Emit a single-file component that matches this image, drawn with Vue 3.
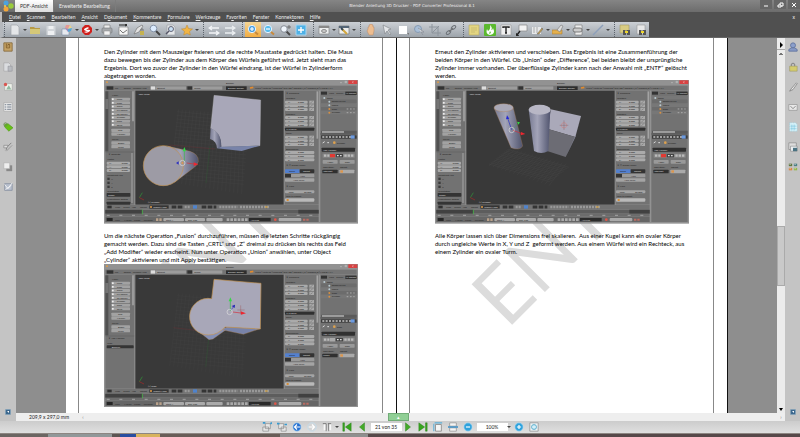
<script setup>
import { ref } from 'vue';

const pageNumber = ref('21 von 35');
const zoomLevel = ref('100%');

const menus = ['Datei', 'Scannen', 'Bearbeiten', 'Ansicht', 'Dokument', 'Kommentare', 'Formulare', 'Werkzeuge', 'Favoriten', 'Fenster', 'Konnektoren', 'Hilfe'];
const mnemonic = { Dokument: 1, Favoriten: 2, Fenster: 1, Konnektoren: 6 };

const lens = (fill, sign = '') => `<path d="M7.5 7.5l3.5 3" stroke="#c88a3c" stroke-width="2"/><circle cx="5" cy="5" r="3.7" fill="${fill}" stroke="#e8f4ff"/><path d="${sign}" stroke="#fff" stroke-width="1.2"/>`;
const sheet = '<path d="M2 1h6l2 2v8H2z" fill="#e4e6e8" stroke="#a0a5aa" stroke-width=".7"/>';
const disc = (fill, sign) => `<circle cx="6" cy="6" r="5" fill="${fill}" stroke="#bce0f4" stroke-width=".8"/><path d="${sign}" stroke="#fff" stroke-width="1.4" fill="none"/>`;

const icons = {
  new: sheet,
  open: '<path d="M1 3h4l1 1h5v6H1z" fill="#b79a45"/><path d="M1 5h10v5H1z" fill="#d5c878"/>',
  save: '<path d="M1.5 2h9v9h-9z" fill="#d2d6da"/><path d="M3.5 2h5v3h-5zM3 7h6v4H3z" fill="#eef0f2"/>',
  convert: '<path d="M1 5h7v6H1z" fill="#e6e9ee" stroke="#8090a8" stroke-width=".6"/><path d="M5 1l4 0-2 4-3-1z" fill="#e49a94"/><path d="M9 1l2 3-4 1z" fill="#e9d48a"/><path d="M7 5l4-1-1 3-3 1z" fill="#55a8d6"/><path d="M4 4l3 1v3z" fill="#a085bd"/>',
  pdf: '<path d="M4 1h4l3 3v4l-3 3H4L1 8V4z" fill="#d0201c"/><path d="M3 5q4-3 5-1L5 6q5-1 4 1-3 3-6 1l4-1q-4 0-4-2z" fill="#fff"/>',
  print: '<path d="M3 1h6v4H3z" fill="#eee" stroke="#777" stroke-width=".6"/><rect x="1" y="4" width="10" height="5" rx="1" fill="#a5a8ab" stroke="#73777b" stroke-width=".6"/><path d="M3 7h6v4H3z" fill="#f2f2f2" stroke="#888" stroke-width=".5"/>',
  mail: '<path d="M2 3h9v8H2z" fill="#f4f4f4" stroke="#777" stroke-width=".6"/><path d="M2 1h8M8 0l2 1-2 1" stroke="#222" fill="none"/><path d="M3 6l3 3 4-3" stroke="#777" fill="none"/>',
  sign: '<path d="M1 10l3-6 5-3 1 1-4 6z" fill="#e2e2e2" stroke="#777" stroke-width=".7"/><path d="M7 7h4v4H7z" fill="#c5b251"/><path d="M8 7V5h2v2" stroke="#777" fill="none"/>',
  find: '<path d="M6 6l5 5" stroke="#444" stroke-width="2"/><circle cx="4.5" cy="4.5" r="3.3" fill="#dcecff" stroke="#8694a8"/>',
  findPage: sheet + '<circle cx="6" cy="5" r="2.5" fill="#c8e0f4" stroke="#667"/><path d="M4 7l-3 3" stroke="#556" stroke-width="1.5"/>',
  star: '<path d="M6 1l1.500 3.500 4 .5-3 2.500.8 3.500L6 9.500 2.700 11l.8-3.500L.5 5l4-.5z" fill="#f1b444" stroke="#b88735" stroke-width=".5"/>',
  swap: '<path d="M1 4h10M4 2L1 4l3 2M1 9h10M8 7l3 2-3 2" stroke="#f3f5f7" fill="none" stroke-width="1.3"/>',
  forward: '<path d="M1 4h10M8 2l3 2-3 2M1 9h10M8 7l3 2-3 2" stroke="#eceff2" fill="none" stroke-width="1.3"/>',
  zoomIn: lens('#4b9fe0', 'M5 3v4M3 5h4'),
  zoomOut: lens('#58bcee', 'M3 5h4'),
  zoomDrag: '<path d="M7 7l4 4" stroke="#4a4a4a" stroke-width="2"/><circle cx="5" cy="5" r="3.3" fill="#eef4fb" stroke="#858b94"/><path d="M10 1v4M8 3h4" stroke="#555" stroke-width=".7"/>',
  fit: '<path d="M1 1h10v10H1z" fill="#4fb1e6" stroke="#a8d5ef"/><path d="M6 3v6M3 6h6" stroke="#fff" stroke-width="1.4"/>',
  view: '<path d="M1 2h10v8H1z" fill="#eceeef" stroke="#888" stroke-width=".7"/><path d="M1 2h10v2H1z" fill="#888"/><ellipse cx="6" cy="7" rx="2.5" ry="1.5" fill="#ccc" stroke="#777" stroke-width=".8"/>',
  edit: '<path d="M1 2h10v8H1z" fill="#eceeef" stroke="#777" stroke-width=".7"/><path d="M1 2h10v2H1z" fill="#567"/><path d="M4 5l5 5" stroke="#d2a63c" stroke-width="2"/><path d="M3 4l2 2" stroke="#345" stroke-width="2"/>',
  hand: '<path d="M3 5V3h1V1h1V0h2v1h1v2h1v4l-1 4H4L2 7z" fill="#edbd90" stroke="#b58a68" stroke-width=".5"/>',
  cursor: '<path d="M2 1l8 4-3 1 3 4-1 1-3-4-2 3z" fill="#e3e5e8" stroke="#85898e" stroke-width=".7"/>',
  block: '<path d="M2 2h8v8H2z" fill="#fff"/><path d="M10 9l2 0v2z" fill="#777"/>',
  select: '<circle cx="5" cy="5" r="3.5" fill="#a9bfd8" stroke="#879bb2"/><path d="M5 4l6 4-3 0 2 3" fill="#ddd" stroke="#8b9199" stroke-width=".8"/>',
  crop: '<path d="M3 0v9h9M0 3h9v9M3 9l7-7" stroke="#8d949c" fill="none"/>',
  link: '<path d="M4 8l4-4" stroke="#777" stroke-width="1.2"/><ellipse cx="3.5" cy="8.5" rx="2.5" ry="1.5" transform="rotate(-40 3.5 8.5)" stroke="#6c7177" fill="none"/><ellipse cx="8.5" cy="3.5" rx="2.5" ry="1.5" transform="rotate(-40 8.5 3.5)" stroke="#6c7177" fill="none"/>',
  note: '<path d="M1 1h10v10H1z" fill="#e3d581" stroke="#b4a866" stroke-width=".6"/><path d="M3 4h6M3 6h6M3 8h4" stroke="#bdb068" stroke-width=".6"/>',
  flame: '<rect width="12" height="12" rx="1" fill="#5bb92f"/><path d="M6 1q3 3 1 5 2 0 2-2 3 6-3 7-5-1-3-6l1 2q3-2 2-6z" fill="#fff"/><path d="M6 7l1 2-2 1z" fill="#5bb92f"/>',
  text: '<path d="M1 1h10v10H1z" fill="#f0f0f0" stroke="#999" stroke-width=".6"/><path d="M3 4V3h6v1M6 3v6M5 9h2" stroke="#222" stroke-width="1.4"/>',
  callout: '<path d="M3 1h8v6H3z" fill="#f3f3f3" stroke="#888" stroke-width=".7"/><path d="M4 7L1 11M0 9v3h3" stroke="#222" fill="none" stroke-width="1.4"/>',
  highlight: '<path d="M0 3h9v7H0z" fill="#e7e9eb"/><path d="M2 3v6M5 3v6" stroke="#aaa"/><path d="M5 10l5-6 1 1-4 5z" fill="#c39c4b" stroke="#666" stroke-width=".5"/>',
  stamp: '<path d="M0 6h10v4H0z" fill="#e4b04d" stroke="#a87d36" stroke-width=".6"/><path d="M5 6l4-5 2 1-3 6z" fill="#ddd" stroke="#777" stroke-width=".6"/>',
  attach: '<path d="M3 1h7v10H3z" fill="#eee" stroke="#777" stroke-width=".6"/><rect x="1" y="4" width="9" height="4" rx="2" fill="#ccc" stroke="#666" stroke-width=".8"/>',
  line: '<path d="M1 11L11 1" stroke="#8d9fba" stroke-width="1.5"/>',
  searchFolder: '<path d="M1 1h9v8H1z" fill="#d9cc82" stroke="#a59b64" stroke-width=".6"/><path d="M4 8V6h2l1 1 1-1h3v5H8V9H7v2H4z" fill="#555"/><path d="M6 7h3v2H6z" fill="#efd72b"/>',
  searchDoc: '<path d="M2 1h8v9H2z" fill="#e8e8e8" stroke="#999" stroke-width=".6"/><path d="M4 8V6h2l1 1 1-1h3v5H8V9H7v2H4z" fill="#555"/><path d="M6 7h3v2H6z" fill="#efd72b"/>',
  bookmarks: '<path d="M1 1h10v10H1z" fill="#c4a265" stroke="#84693c"/><path d="M4 2v5h4V3H6v3" stroke="#765322" fill="#e3c280"/>',
  pages: '<path d="M1 1h6l2 2v8H1z" fill="#dadcdf" stroke="#999" stroke-width=".6"/><path d="M6 5h5v6H6z" fill="#b8bbc0" stroke="#8c8f94" stroke-width=".6"/>',
  comments: '<path d="M2 2h9v8H2z" fill="#eef2ea" stroke="#999" stroke-width=".6"/><circle cx="3" cy="3" r="2" fill="#d95550"/><path d="M5 7l2-3 3 5H4z" fill="#91b9a2"/>',
  fields: '<path d="M1 1h10v10H1z" fill="#f0f0f0" stroke="#999" stroke-width=".6"/><path d="M2 3h2M5 3h5M2 5h2M5 5h5M2 7h2M5 7h5M2 9h2M5 9h5" stroke="#7c8693"/>',
  tag: '<path d="M2 3l4-1 6 5-5 4-5-5z" fill="#67c116" stroke="#468f13" stroke-width=".6"/><circle cx="3" cy="3" r="2" stroke="#688b51" fill="none"/>',
  pen: '<path d="M3 10q2-1 1-3l6-6" stroke="#777" fill="none"/><path d="M1 4h5L5 7H1zM4 11l7-7" fill="#ddd" stroke="#858585" stroke-width=".8"/>',
  layers: '<path d="M4 4h7v7H4z" fill="#888"/><path d="M1 1h7v7H1z" fill="#eee" stroke="#aaa" stroke-width=".6"/>',
  check: '<path d="M2 2h9v8H2z" fill="#b7bfcd" stroke="#8992a1"/><path d="M2 3l4 5 5-7M3 9l7-5" stroke="#f7f7f7" fill="none"/>',
  user: '<circle cx="6" cy="4" r="3" fill="#8b9fcb" stroke="#60729c"/><path d="M1 11V9l3-2h4l3 2v2z" fill="#8699c5" stroke="#60729c"/>',
  lock: '<path d="M4 5V3q2-3 4 0v3" stroke="#888" fill="none" stroke-width="1.3"/><path d="M2 5h9v6H2z" fill="#d4cc6e" stroke="#97905b" stroke-width=".6"/>',
  brush: '<path d="M2 11l2-3 6-7 1 1-5 7z" fill="#e9e9e9" stroke="#666" stroke-width=".7"/>',
  envelope: '<path d="M1 3h10v7H1z" fill="#e8e8e8" stroke="#888" stroke-width=".7"/><path d="M3 5l3 3 3-3" stroke="#777" fill="none"/>',
  form: '<path d="M2 1h7l2 2v8H2z" fill="#d9f3fa" stroke="#8bcadb" stroke-width=".7" stroke-dasharray="1"/><path d="M4 3v7M6 3v7M8 3v7M3 5h7M3 8h7" stroke="#63b9d5" stroke-width=".5"/>',
  disk: '<path d="M1 1h9v8H1z" fill="#ddd" stroke="#888" stroke-width=".8"/><path d="M3 5h8v6H3z" fill="#e9edf0" stroke="#777" stroke-width=".6"/><path d="M6 7h5v4H6z" fill="#4b7382"/>',
  tiles: '<path d="M1 2h4v3H1z" fill="#607840"/><path d="M7 2h4v3H7z" fill="#4d8084"/><path d="M1 7h4v3H1z" fill="#d88746"/><path d="M7 7h4v3H7z" fill="#96b84c"/><path d="M2 3h1M8 3h1M2 8h1M8 8h1" stroke="#eef"/>',
  pop: '<path d="M1 1h10v10H1z" fill="#3c688e" stroke="#83a6bf"/><path d="M4 4h4v4z" fill="#fff"/>',
  rotateLeft: '<path d="M4 2h6v6H4zM1 6h7v5H1z" fill="#e8e8e8" stroke="#888" stroke-width=".8"/><path d="M1 1h3M10 2l2-1" stroke="#399bd0" stroke-width="2"/>',
  rotateRight: '<path d="M2 2h6v6H2zM5 6h6v5H5z" fill="#e8e8e8" stroke="#888" stroke-width=".8"/><path d="M0 2h3M9 3h3" stroke="#399bd0" stroke-width="2"/>',
  back: disc('#256fd0', 'M10 6H4M6 3L3 6l3 3'),
  ahead: disc('#d4d4d4', 'M2 6h6M6 3l3 3-3 3'),
  spread: '<path d="M2 2h3v8H2zM8 2h3v8H8z" fill="#f8f8f8"/><path d="M1 2h4v8M7 2h4M8 2v8M5 10v1M8 10v1" stroke="#666" fill="none"/>',
  first: '<path d="M1 1h2v10H1zM11 1v10L4 6z" fill="#37a51f" stroke="#267d18" stroke-width=".5"/>',
  prev: '<path d="M9 1v10L3 6z" fill="#43aa28" stroke="#267d18" stroke-width=".5"/>',
  next: '<path d="M3 1v10l6-5z" fill="#43aa28" stroke="#267d18" stroke-width=".5"/>',
  last: '<path d="M9 1h2v10H9zM1 1v10l7-5z" fill="#37a51f" stroke="#267d18" stroke-width=".5"/>',
  fitPage: '<path d="M3 3h7v8H3z" fill="#f5f5f5" stroke="#888"/><path d="M2 1h9M1 2v9" stroke="#5baed8" stroke-width="1.3"/>',
  fitWidth: '<path d="M2 1h8v4H2zM2 7h8v4H2z" fill="#f5f5f5" stroke="#999"/><path d="M0 5h12v2H0z" fill="#4b94c6"/>',
  minus: disc('#2fa2dc', 'M3.5 6h5'),
  plus: disc('#2fa2dc', 'M3.5 6h5M6 3.5v5'),
  loupe: '<path d="M1 1h10v10H1z" fill="#edf3f5" stroke="#999"/><circle cx="6" cy="6" r="3" fill="#b9e4f3" stroke="#5aaac8"/><path d="M4 6h4" stroke="#fff"/>'
};

const tool = (name, label, caret = false) => ({ name, label, caret });
const toolGroups = [
  [tool('new', 'Neu', true), tool('open', 'Öffnen'), tool('save', 'Speichern'), tool('convert', 'Konvertieren', true), tool('pdf', 'PDF erstellen', true), tool('print', 'Drucken'), tool('mail', 'Senden'), tool('sign', 'Signieren'), tool('find', 'Suchen'), tool('findPage', 'Seite suchen'), tool('star', 'Favoriten', true)],
  [tool('swap', 'Tauschen'), tool('forward', 'Weiter')],
  [tool('zoomIn', 'Vergrößern'), tool('zoomOut', 'Verkleinern'), tool('zoomDrag', 'Dynamischer Zoom'), tool('fit', 'Einpassen')],
  [tool('view', 'Anzeigen', true), tool('edit', 'Bearbeiten', true)],
  [tool('hand', 'Hand'), tool('cursor', 'Auswahl'), tool('block', 'Bereich'), tool('select', 'Objekt'), tool('crop', 'Beschneiden'), tool('link', 'Verknüpfung')],
  [tool('note', 'Notiz'), tool('flame', 'Hervorheben'), tool('text', 'Text'), tool('callout', 'Legende'), tool('highlight', 'Markieren', true), tool('stamp', 'Stempel', true), tool('attach', 'Anhang', true), tool('line', 'Linie', true)],
  [tool('searchFolder', 'Ordner durchsuchen'), tool('searchDoc', 'Dokument durchsuchen')]
];

const leftTools = ['bookmarks', 'pages', 'comments', 'fields', 'tag', 'pen', 'layers', 'check'];
const rightTools = ['user', 'lock', 'brush', 'envelope', 'form', 'disk', 'tiles'];

const pages = [
  [
    {
      lines: [
        'Den Zylinder mit dem Mauszeiger fixieren und die rechte Maustaste gedrückt halten. Die Maus',
        'dazu bewegen bis der Zylinder aus dem Körper des Würfels geführt wird. Jetzt sieht man das',
        'Ergebnis. Dort wo zuvor der Zylinder in den Würfel eindrang, ist der Würfel in Zylinderform',
        'abgetragen worden.'
      ],
      scene: 'cut'
    },
    {
      lines: [
        'Um die nächste Operation „Fusion“ durchzuführen, müssen die letzten Schritte rückgängig',
        'gemacht werden. Dazu sind die Tasten „CRTL“ und „Z“ dreimal zu drücken bis rechts das Feld',
        '„Add Modifier“ wieder erscheint. Nun unter Operation „Union“ anwählen, unter Object',
        '„Cylinder“ aktivieren und mit Apply bestätigen.'
      ],
      scene: 'union'
    }
  ],
  [
    {
      lines: [
        'Erneut den Zylinder aktivieren und verschieben. Das Ergebnis ist eine Zusammenführung der',
        'beiden Körper in den Würfel. Ob „Union“ oder „Difference“, bei beiden bleibt der ursprüngliche',
        'Zylinder immer vorhanden. Der überflüssige Zylinder kann nach der Anwahl mit „ENTF“ gelöscht',
        'werden.'
      ],
      scene: 'moved'
    },
    {
      lines: [
        'Alle Körper lassen sich über Dimensions frei skalieren.  Aus einer Kugel kann ein ovaler Körper',
        'durch ungleiche Werte in X, Y und Z  geformt werden. Aus einem Würfel wird ein Rechteck, aus',
        'einem Zylinder ein ovaler Turm.'
      ]
    }
  ]
];

// contents of the Blender window
const meshButtons = ['Plane', 'Cube', 'Circle', 'UV Sphere', 'Ico Sphere', 'Cylinder', 'Cone', 'Torus'];
const fieldRows = [
  { label: 'Location:', y: 179 },
  { label: 'Rotation:', y: 225 },
  { label: 'Scale:', y: 284 },
  { label: 'Dimensions:', y: 330 }
];
const infoMenus = ['File', 'Render', 'Window', 'Help'];
const viewMenus = ['View', 'Select', 'Add', 'Object'];
const timeMenus = ['View', 'Marker', 'Frame', 'Playback'];
const outliner = ['Scene', 'RenderLayers', 'World', 'Cube', 'Cylinder'];
</script>

<template>
  <div class="app">
    <header class="titlebar">
      <svg class="logo" viewBox="0 0 12 12" aria-hidden="true">
        <circle cx="4" cy="3" r="2.5" fill="#4aa3df" />
        <circle cx="9" cy="6" r="2.7" fill="#9acb3c" />
        <circle cx="4" cy="9" r="2.5" fill="#f2a63a" />
        <circle cx="3" cy="6" r="1" fill="#f8d24c" />
      </svg>
      <button class="tab active">PDF-Ansicht</button>
      <button class="tab">Erweiterte Bearbeitung</button>
      <h1>Blender Anleitung 3D Drucker - PDF Converter Professional 8.1</h1>
      <div class="window-buttons">
        <button aria-label="Minimieren"><svg viewBox="0 0 8 8"><path d="M2 5h4" /></svg></button>
        <button aria-label="Wiederherstellen"><svg viewBox="0 0 8 8"><path d="M2 4h3v2H2zM4 4V2h3v3H5" /></svg></button>
        <button aria-label="Schließen"><svg viewBox="0 0 8 8"><path d="M2 2l4 4M6 2L2 6" /></svg></button>
      </div>
    </header>

    <nav class="menubar">
      <button v-for="menu in menus" :key="menu">{{ menu.slice(0, mnemonic[menu] || 0) }}<u>{{ menu[mnemonic[menu] || 0] }}</u>{{ menu.slice((mnemonic[menu] || 0) + 1) }}</button>
      <button class="close-doc" aria-label="Dokument schließen">x</button>
    </nav>

    <div class="toolrow">
      <div class="toolbar">
        <div v-for="(group, i) in toolGroups" :key="i" class="group">
          <template v-for="item in group" :key="item.name">
            <button class="tool" :class="{ pressed: item.name === 'zoomIn' }" :aria-label="item.label">
              <svg viewBox="0 0 12 12" fill="none" v-html="icons[item.name]"></svg>
            </button>
            <span v-if="item.caret" class="caret"></span>
          </template>
        </div>
      </div>
    </div>

    <div class="workspace">
      <aside class="side">
        <button v-for="name in leftTools" :key="name" :aria-label="name">
          <svg viewBox="0 0 12 12" fill="none" v-html="icons[name]"></svg>
        </button>
        <button class="expand" aria-label="Ausklappen"><svg viewBox="0 0 12 12" v-html="icons.pop"></svg></button>
      </aside>

      <main class="document">
        <article v-for="(page, p) in pages" :key="p" class="page">
          <svg class="watermark" viewBox="0 0 331 375" preserveAspectRatio="xMinYMin slice" aria-hidden="true">
            <text transform="translate(110 292) rotate(-45)">ENTWURF</text>
          </svg>
          <div class="sheet">
            <section v-for="(block, b) in page" :key="b">
              <p><span v-for="line in block.lines" :key="line">{{ line }}</span></p>

              <svg v-if="block.scene" class="blender" viewBox="12 121 762 431">
                <defs>
                  <linearGradient :id="'tube' + p + b" x1="0" x2="1">
                    <stop offset="0" stop-color="#777a92" />
                    <stop offset=".4" stop-color="#a3a4b8" />
                    <stop offset="1" stop-color="#50546e" />
                  </linearGradient>
                </defs>
                <rect x="12" y="121" width="762" height="431" fill="#929292" />
                <path d="M18 125h6v5h-6z" fill="#d49a52" />
                <text x="378" y="133" class="dark">Blender</text>
                <rect x="745" y="122" width="27" height="11" fill="#d84242" />
                <path d="M756 125l5 5m0-5l-5 5M720 129h6M735 125h5v4h-5z" stroke="#eee" fill="none" />

                <rect x="16" y="138" width="754" height="14" fill="#747474" />
                <rect x="20" y="140" width="20" height="10" fill="#333" />
                <text v-for="(item, i) in infoMenus" :key="item" :x="44 + i * 27" y="148" class="dark">{{ item }}</text>
                <rect x="152" y="140" width="14" height="10" fill="#ddd" />
                <rect x="168" y="140" width="90" height="10" fill="#9c9c9c" />
                <rect x="262" y="140" width="14" height="10" fill="#333" />
                <rect x="279" y="140" width="88" height="10" fill="#9c9c9c" />
                <text x="172" y="148" class="dark">Default</text>
                <text x="283" y="148" class="dark">Scene</text>
                <rect x="378" y="140" width="62" height="11" fill="#2e2e2e" />
                <text x="384" y="148" class="light">Blender Render</text>
                <path d="M450 145l10-2" stroke="#e28a2d" stroke-width="5" />
                <text x="465" y="148" class="dark">v2.69 | Verts:96 | Faces:38 | Tris:188 | Objects:1/2 | Lamps:0/0 | Mem:8.41M</text>

                <rect x="16" y="153" width="87" height="342" fill="#727272" />
                <rect x="16" y="155" width="9" height="180" fill="#515151" />
                <path d="M16 178h9v30h-9z" fill="#747474" />
                <path d="M99 155v90" stroke="#a3a3a3" stroke-width="5" />
                <text x="36" y="170" class="dark">Mesh:</text>
                <g v-for="(name, i) in meshButtons" :key="name">
                  <rect x="34" :y="174 + i * 11" width="56" height="9" rx="2" fill="#a2a2a2" />
                  <rect x="36" :y="176 + i * 11" width="5" height="5" fill="#eee" />
                  <text x="50" :y="181 + i * 11" class="dark">{{ name }}</text>
                </g>
                <rect x="34" y="267" width="56" height="10" rx="2" fill="#a2a2a2" />
                <rect x="34" y="278" width="56" height="10" rx="2" fill="#a2a2a2" />
                <text x="54" y="275" class="dark">Grid</text>
                <text x="51" y="286" class="dark">Monkey</text>
                <text x="36" y="301" class="dark">Curve:</text>
                <rect x="34" y="305" width="56" height="10" rx="2" fill="#a2a2a2" />
                <rect x="34" y="316" width="56" height="10" rx="2" fill="#a2a2a2" />
                <text x="54" y="313" class="dark">Bezier</text>
                <text x="54" y="324" class="dark">Circle</text>
                <path d="M16 337h87" stroke="#565656" />
                <text x="25" y="346" class="dark">▼ {{ block.scene === 'union' ? 'Add Modifier' : 'Translate' }}</text>
                <g v-if="block.scene === 'union'">
                  <text x="22" y="360" class="dark">Type</text>
                  <rect x="20" y="365" width="81" height="9" rx="2" fill="#343434" />
                  <text x="35" y="372" class="light">Boolean</text>
                </g>
                <g v-else>
                  <text x="22" y="360" class="dark">Vector</text>
                  <g v-for="i in 3" :key="i">
                    <rect x="20" :y="355 + i * 11" width="70" height="9" rx="3" fill="#aaa" />
                    <text x="28" :y="362 + i * 11" class="dark">{{ 'XYZ'[i - 1] }}:</text>
                    <text x="65" :y="362 + i * 11" class="dark">0.000</text>
                    <rect x="22" :y="402 + i * 12" width="7" height="7" fill="#3b3b3b" />
                    <text x="34" :y="408 + i * 12" class="dark">{{ 'XYZ'[i - 1] }}</text>
                  </g>
                  <text x="22" y="408" class="dark">Constraint Axis</text>
                  <text x="22" y="456" class="dark">Orientation</text>
                  <rect x="20" y="460" width="71" height="11" rx="2" fill="#343434" />
                  <text x="24" y="468" class="light">Global</text>
                  <text x="22" y="481" class="dark">Proportional Editing</text>
                  <rect x="20" y="486" width="71" height="9" rx="2" fill="#343434" />
                  <path d="M96 340v150" stroke="#999" stroke-width="4" />
                </g>

                <rect x="106" y="153" width="445" height="342" fill="#393939" />
                <text x="116" y="166" class="light">User Persp</text>
                <text x="144" y="489" class="light">(1) {{ block.scene === 'union' ? 'Cube' : 'Cylinder' }}</text>
                <path d="M118 474l9-15" stroke="#2f9a38" stroke-width="2" />
                <path d="M118 474l14 7" stroke="#a82828" stroke-width="2" />

                <g v-if="block.scene === 'cut'">
                  <g stroke="#474747">
                    <path v-for="i in 19" :key="'a' + i" :d="`M${225 + i * 11} ${208 + i}L${197 + i * 12} ${425 + i * 2}`" />
                    <path v-for="i in 19" :key="'b' + i" :d="`M${232 - i} ${205 + i * 11}l218 20`" />
                  </g>
                  <path d="M205 316l140 12" stroke="#742c32" />
                  <path d="M330 320l-12 110" stroke="#285d2e" />
                  <path d="M342 167l140 14-2 137-116 4q0-43-32-56z" fill="#a8a7b8" stroke="#bbb" />
                  <path d="M332 266q33 12 32 56l-13 4q-1-23-21-28z" :fill="`url(#tube${p}${b})`" />
                  <path d="M351 326l13-5 116-3-55 16z" fill="#7883a9" />
                  <path d="M205 320l65 15q27 10 25 30-1 11-15 20l-56 43z" :fill="`url(#tube${p}${b})`" stroke="#ba8950" />
                  <circle cx="190" cy="378" r="60" fill="#9d9ba5" stroke="#c29250" stroke-width="2" />
                  <path d="M253 365v-32" stroke="#35b947" stroke-width="2" />
                  <path d="M248 335l5-13 5 13z" fill="#35d747" />
                  <path d="M260 370l22 3" stroke="#d32d39" stroke-width="2" />
                  <path d="M281 368l14 6-14 5z" fill="#ed2730" />
                  <path d="M236 365v10l-8-5z" fill="#2e32c2" />
                  <circle cx="247" cy="370" r="8" fill="none" stroke="#ddd" stroke-width="2" />
                  <circle cx="247" cy="370" r="3" fill="#dc9653" />
                </g>

                <g v-else-if="block.scene === 'union'">
                  <g stroke="#444">
                    <path v-for="i in 19" :key="'a' + i" :d="`M${225 + i * 11} ${208 + i}L${197 + i * 12} ${425 + i * 2}`" />
                    <path v-for="i in 19" :key="'b' + i" :d="`M${232 - i} ${205 + i * 11}l218 20`" />
                  </g>
                  <path d="M220 312l70 8" stroke="#742c32" />
                  <path d="M326 345l-9 85" stroke="#285d2e" />
                  <path d="M295 323l32 25 12-2 42-30-30-20z" fill="#8490b8" stroke="#ba8950" />
                  <path d="M369 319l11-9 101 5-51 17z" fill="#7883a9" stroke="#ba8950" />
                  <path d="M342 167l141 12-2 137-106-6q-22 24-48 24a56 55 0 1 1 8-109z" fill="#a8a7b8" stroke="#c29250" stroke-width="2" />
                  <path d="M391 262v-30" stroke="#35b947" stroke-width="2" />
                  <path d="M386 233l5-12 5 12z" fill="#35d747" />
                  <path d="M394 258l6-8" stroke="#2e32c2" stroke-width="2" />
                  <path d="M395 247l10-4-1 10z" fill="#2429b4" />
                  <path d="M398 265l24 3" stroke="#d32d39" stroke-width="2" />
                  <path d="M422 263l16 6-15 4z" fill="#ed2730" />
                  <circle cx="389" cy="265" r="8" fill="none" stroke="#ddd" stroke-width="2" />
                  <path d="M422 245v27M412 259h22" stroke="#944" />
                </g>

                <g v-else transform="translate(-96 0)">
                  <g stroke="#4a4a4a">
                    <path v-for="i in 16" :key="'a' + i" :d="`M${325 + i * 11} ${324 + i * 3}L${258 + i * 12} ${374 + i * 4}`" />
                    <path v-for="i in 12" :key="'b' + i" :d="`M${330 - i * 5} ${325 + i * 4}l185 54`" />
                  </g>
                  <path d="M285 205h58l28 114q-8 15-35 5z" :fill="`url(#tube${p}${b})`" stroke="#a77a4e" />
                  <ellipse cx="314" cy="204" rx="29" ry="12" fill="#aaa9b7" stroke="#b17b48" />
                  <path d="M455 209l91 20-17 63-82-24z" fill="#aaa9b9" />
                  <path d="M447 268l82 24-29 60-58-19z" fill="#6c6c74" />
                  <path d="M546 229l-17 63-29 60 31-68z" fill="#85879b" />
                  <path d="M389 210h65l-6 124q-21 12-43 0z" :fill="`url(#tube${p}${b})`" />
                  <ellipse cx="422" cy="210" rx="33" ry="15" fill="#b8b7c5" />
                  <path d="M338 270l-12-34" stroke="#262bc0" stroke-width="2" />
                  <path d="M321 239l3-12 7 10z" fill="#2328d5" />
                  <path d="M342 268l13-15" stroke="#35b947" />
                  <path d="M354 246l9 2-5 7z" fill="#36d548" />
                  <path d="M342 272l24 9" stroke="#d32d39" stroke-width="2" />
                  <path d="M366 277l13 6-14 4z" fill="#ed2730" />
                  <circle cx="338" cy="271" r="8" fill="none" stroke="#ddd" stroke-width="2" />
                  <circle cx="495" cy="257" r="8" fill="none" stroke="#c88" stroke-width="2" />
                  <path d="M495 242v29M482 257h26" stroke="#834b53" />
                </g>

                <rect x="554" y="153" width="102" height="342" fill="#727272" />
                <path d="M652 155v142" stroke="#a3a3a3" stroke-width="5" />
                <text x="558" y="163" class="dark">▼ Transform</text>
                <g v-for="row in fieldRows" :key="row.label">
                  <text x="558" :y="row.y" class="dark">{{ row.label }}</text>
                  <g v-for="(name, i) in 'XYZ'" :key="name">
                    <rect x="555" :y="row.y + 4 + i * 11" :width="row.y === 330 ? 88 : 68" height="9" rx="3" fill="#aaa" />
                    <rect v-if="row.y !== 330" x="628" :y="row.y + 4 + i * 11" width="14" height="9" fill="#aaa" />
                    <text x="564" :y="row.y + 11 + i * 11" class="dark">{{ name }}:</text>
                    <text x="594" :y="row.y + 11 + i * 11" class="dark">0.000</text>
                    <path v-if="row.y !== 330" :d="`M631 ${row.y + 11 + i * 11}l7-5`" stroke="#444" />
                  </g>
                </g>
                <rect x="555" y="264" width="88" height="9" rx="2" fill="#303030" />
                <text x="559" y="271" class="light">XYZ Euler</text>
                <text x="558" y="380" class="dark">▼ ☑ Grease Pencil</text>
                <rect x="555" y="389" width="44" height="11" rx="2" fill="#5380cf" />
                <rect x="599" y="389" width="44" height="11" rx="2" fill="#333" />
                <text x="567" y="397" class="dark">Scene</text>
                <text x="609" y="397" class="light">Object</text>
                <rect x="555" y="403" width="18" height="10" fill="#333" />
                <rect x="573" y="403" width="70" height="10" rx="2" fill="#999" />
                <text x="600" y="411" class="dark">New</text>
                <rect x="555" y="416" width="88" height="10" rx="2" fill="#a4a4a4" />
                <text x="580" y="424" class="dark">New Layer</text>
                <text x="558" y="442" class="dark">▼ View</text>
                <rect x="555" y="452" width="88" height="9" rx="3" fill="#a4a4a4" />
                <text x="566" y="459" class="dark">Lens:</text>
                <text x="612" y="459" class="dark">35.000</text>
                <text x="558" y="472" class="dark">Lock to Object:</text>
                <rect x="555" y="476" width="88" height="10" rx="3" fill="#b9b9b9" />
                <path d="M560 478h6v6h-6z" fill="#d58c35" />

                <rect x="661" y="153" width="109" height="394" fill="#727272" />
                <rect x="663" y="156" width="18" height="9" fill="#333" />
                <text x="687" y="163" class="dark">View</text>
                <text x="709" y="163" class="dark">Search</text>
                <rect x="736" y="156" width="34" height="10" fill="#333" />
                <text x="737" y="163" class="light">All Scenes</text>
                <g v-for="(name, i) in outliner" :key="name">
                  <rect x="663" :y="169 + i * 11" width="107" height="11" :fill="i % 2 ? '#6c6c6c' : '#777'" />
                  <circle :cx="i ? 688 : 673" :cy="175 + i * 11" r="3" :fill="i > 2 ? '#d79042' : '#b9c9d0'" />
                  <text :x="i ? 695 : 680" :y="177 + i * 11" class="dark">{{ name }}</text>
                  <path v-if="i > 2" :d="`M740 ${175 + i * 11}h24`" stroke="#aaa" stroke-width="3" stroke-dasharray="5" />
                </g>
                <path d="M663 277h107" stroke="#5b5b5b" stroke-width="7" />
                <path d="M666 277h66" stroke="#aaa" stroke-width="5" />
                <path d="M661 283h109" stroke="#444" stroke-width="2" />
                <rect x="663" y="287" width="107" height="10" fill="#3b3b3b" />
                <path d="M667 292h88" stroke="#a2a2a2" stroke-width="6" stroke-dasharray="6 4" />
                <rect x="752" y="287" width="12" height="10" fill="#6d9be0" />
                <path d="M668 310l6-4m8 3h5" stroke="#ddd" stroke-width="3" />
                <circle cx="703" cy="309" r="4" fill="#dda14e" />
                <text x="710" y="312" class="dark">{{ block.scene === 'union' ? 'Cube' : 'Cylinder' }}</text>
                <rect x="665" y="324" width="100" height="12" rx="2" fill="#303030" />
                <text x="669" y="333" class="light">Add Modifier</text>
                <rect x="668" y="342" width="96" height="12" fill="#888" />
                <path d="M672 348h16m45 0h28" stroke="#bbb" stroke-width="7" stroke-dasharray="7 3" />
                <rect x="690" y="343" width="15" height="10" :fill="block.scene === 'union' ? '#aaa' : '#e13a33'" />
                <rect x="707" y="343" width="22" height="10" fill="#444" />
                <path d="M711 348h14" stroke="#ddd" stroke-width="4" stroke-dasharray="5 4" />
                <rect x="668" y="361" width="45" height="11" rx="2" fill="#999" />
                <rect x="719" y="361" width="45" height="11" rx="2" fill="#999" />
                <text x="682" y="369" class="dark">Apply</text>
                <text x="734" y="369" class="dark">Copy</text>
                <text x="669" y="386" class="dark">Operation:</text>
                <text x="720" y="386" class="dark">Object:</text>
                <rect x="667" y="390" width="46" height="11" rx="2" fill="#303030" />
                <text x="670" y="398" class="light">{{ block.scene === 'union' ? 'Union' : 'Intersect' }}</text>
                <rect x="718" y="390" width="45" height="11" rx="2" fill="#aaa" />
                <path d="M721 392h8v7h-8z" fill="#dd964b" />

                <rect x="16" y="496" width="640" height="13" fill="#727272" />
                <path d="M22 502h13" stroke="#303030" stroke-width="8" />
                <text v-for="(item, i) in viewMenus" :key="item" :x="45 + i * 25" y="505" class="dark">{{ item }}</text>
                <rect x="148" y="497" width="58" height="10" fill="#343434" />
                <circle cx="153" cy="502" r="3" fill="#e19b47" />
                <text x="160" y="505" class="light">Object Mode</text>
                <path d="M215 502h35M305 502h44" stroke="#343434" stroke-width="9" stroke-dasharray="14 4" />
                <path d="M254 502h18M358 502h55M420 502h90" stroke="#999" stroke-width="7" stroke-dasharray="6 3" />
                <path d="M279 502h12" stroke="#4f83cc" stroke-width="10" />
                <path d="M495 502h8" stroke="#d1a34a" stroke-width="4" />
                <rect x="16" y="510" width="640" height="12" fill="#5d5d5d" />
                <path d="M16 516h111M595 516h61" stroke="#414141" stroke-width="12" />
                <path d="M16 527h640" stroke="#6c6c6c" stroke-width="9" />
                <path d="M20 527h630" stroke="#a5a5a5" stroke-width="3" stroke-dasharray="9 29" />
                <path d="M127 510v14" stroke="#45ce45" stroke-width="2" />
                <rect x="16" y="532" width="640" height="15" fill="#666" />
                <rect x="20" y="535" width="18" height="9" fill="#262626" />
                <text v-for="(item, i) in timeMenus" :key="item" :x="44 + i * 29" y="543" class="dark">{{ item }}</text>
                <path d="M168 540h18" stroke="#baa28b" stroke-width="8" stroke-dasharray="7 3" />
                <rect x="190" y="535" width="62" height="10" rx="3" fill="#aaa" />
                <rect x="255" y="535" width="60" height="10" rx="3" fill="#aaa" />
                <rect x="319" y="535" width="49" height="10" rx="3" fill="#aaa" />
                <text x="198" y="543" class="dark">Start: 1</text>
                <text x="264" y="543" class="dark">End: 250</text>
                <path d="M380 540h63" stroke="#aaa" stroke-width="8" stroke-dasharray="8 3" />
                <rect x="447" y="535" width="65" height="10" fill="#2b2b2b" />
                <text x="452" y="543" class="light">No Sync</text>
                <circle cx="526" cy="540" r="4" fill="#de5548" />
                <rect x="536" y="535" width="68" height="10" rx="3" fill="#aaa" />
                <path d="M609 540h20" stroke="#ba6b61" stroke-width="6" stroke-dasharray="7 3" />
              </svg>
            </section>
          </div>
        </article>
      </main>

      <div class="vscroll">
        <button class="split" aria-label="Bereich öffnen"><svg viewBox="0 0 8 8"><path d="M3 1l3 3-3 3z" /></svg></button>
        <button aria-label="Nach oben"><svg viewBox="0 0 8 8"><path d="M2 5l2-2 2 2-1 0-1-1-1 1z" /></svg></button>
        <div class="vtrack"><span class="vthumb"></span></div>
        <button aria-label="Nach unten"><svg viewBox="0 0 8 8"><path d="M2 3h4L4 6z" /></svg></button>
      </div>

      <aside class="side right">
        <button v-for="name in rightTools" :key="name" :aria-label="name">
          <svg viewBox="0 0 12 12" fill="none" v-html="icons[name]"></svg>
        </button>
        <button class="expand" aria-label="Einklappen"><svg viewBox="0 0 12 12" v-html="icons.pop"></svg></button>
      </aside>

      <div class="hscroll">
        <span class="size">209,9 x 297,0 mm</span>
        <button aria-label="Nach links">‹</button>
        <span class="htrack"><span class="hthumb">▴</span></span>
        <button aria-label="Nach rechts">›</button>
      </div>
    </div>

    <footer class="statusbar">
      <button v-for="name in ['rotateLeft', 'rotateRight', 'back', 'ahead', 'spread']" :key="name" :aria-label="name">
        <svg viewBox="0 0 12 12" fill="none" v-html="icons[name]"></svg>
      </button>
      <span class="caret"></span>
      <button aria-label="Erste Seite"><svg viewBox="0 0 12 12" v-html="icons.first"></svg></button>
      <button aria-label="Vorherige Seite"><svg viewBox="0 0 12 12" v-html="icons.prev"></svg></button>
      <input v-model="pageNumber" aria-label="Seite">
      <button aria-label="Nächste Seite"><svg viewBox="0 0 12 12" v-html="icons.next"></svg></button>
      <button v-for="name in ['last', 'fitPage', 'fitWidth', 'minus']" :key="name" :aria-label="name">
        <svg viewBox="0 0 12 12" fill="none" v-html="icons[name]"></svg>
      </button>
      <input v-model="zoomLevel" aria-label="Zoom">
      <span class="caret"></span>
      <button v-for="name in ['plus', 'loupe']" :key="name" :aria-label="name">
        <svg viewBox="0 0 12 12" fill="none" v-html="icons[name]"></svg>
      </button>
    </footer>
    <div class="taskbar"></div>
  </div>
</template>

<style>
body {
  margin: 0;
}
</style>

<style scoped>
.app {
  display: flex;
  flex-direction: column;
  height: 100vh;
  overflow: hidden;
  background: #505050;
  font: 5px/8px Lato, "Open Sans", sans-serif;
  color: #222;
}
button, input {
  font: inherit;
  color: inherit;
  border: 0;
  padding: 0;
  margin: 0;
  background: none;
}
button {
  flex: none;
}
svg {
  display: block;
}
.titlebar {
  position: relative;
  display: flex;
  height: 12px;
  flex: none;
  background: linear-gradient(#858585, #6c6c6c);
  color: #eee;
}
.logo {
  width: 12px;
  height: 12px;
  margin: 0 1px 0 2px;
}
.tab {
  padding: 0 5px;
  border-right: 1px solid #7c7c7c;
}
.tab.active {
  background: linear-gradient(#fff, #ddd);
  color: #333;
}
.titlebar h1 {
  position: absolute;
  top: 2px;
  left: 0;
  right: 0;
  margin: 0;
  padding-left: 24px;
  text-align: center;
  font: 4px/8px "DejaVu Sans", sans-serif;
  pointer-events: none;
}
.window-buttons {
  display: flex;
  gap: 2px;
  margin-left: auto;
}
.window-buttons button {
  width: 12px;
  height: 9px;
  background: #666;
}
.window-buttons svg {
  width: 8px;
  height: 8px;
  margin: auto;
  fill: none;
  stroke: #fff;
}
.menubar {
  display: flex;
  height: 10px;
  flex: none;
  gap: 6px;
  padding-left: 7px;
  border-left: 2px solid #bbb;
  box-sizing: border-box;
  color: #eee;
}
.menubar u {
  text-decoration-thickness: 1px;
}
.close-doc {
  margin-left: auto;
  padding-right: 5px;
}
.toolrow {
  height: 16px;
  flex: none;
  border-left: 3px solid #b4b8bd;
  border-bottom: 1px solid #666;
  box-sizing: border-box;
}
.toolbar {
  display: flex;
  justify-content: space-between;
  width: 81%;
  height: 15px;
  background: linear-gradient(#ccd0d5, #9da4ab);
}
.group {
  display: flex;
  align-items: center;
  border-left: 1px dotted #5d646c;
  padding-left: 2px;
}
.group:first-child {
  margin-left: 1px;
}
.tool {
  width: 16px;
  height: 15px;
}
.tool svg {
  width: 12px;
  height: 12px;
  margin: auto;
}
.tool.pressed {
  background: linear-gradient(#f5d696, #f2ad42);
}
.caret {
  flex: none;
  width: 0;
  border: 2px solid transparent;
  border-top-color: #444;
  border-bottom: 0;
}
.workspace {
  flex: 1;
  min-height: 0;
  display: grid;
  grid-template-columns: 16px minmax(0, 1fr) 8px 15px;
  grid-template-rows: minmax(0, 1fr) 8px;
  background: #c4c4c4;
}
.side {
  grid-column: 1;
  grid-row: 1 / 3;
  display: flex;
  flex-direction: column;
  align-items: center;
  padding: 4px 0;
}
.side.right {
  grid-column: 4;
}
.side button {
  height: 10px;
  margin-bottom: 10px;
}
.side svg {
  width: 10px;
  height: 10px;
}
.side .expand {
  margin: auto 0 0;
}
.side .expand svg {
  width: 6px;
  height: 6px;
}
.document {
  grid-column: 2;
  grid-row: 1;
  display: flex;
  padding: 0 49px 0 50px;
  background: #8e8e8e;
  overflow: hidden;
}
.page {
  position: relative;
  flex: 1;
  min-width: 0;
  padding: 0 13px 0 12px;
  background: #fff;
  border-right: 1px solid #111;
  overflow: hidden;
}
/* only the lower part of the stamp shows under the figures */
.watermark {
  position: absolute;
  inset: 0;
  width: 100%;
  height: 100%;
  clip-path: inset(40% 0 0 0);
}
.watermark text {
  font: 80px Lato, sans-serif;
  fill: #dcdcdc;
}
.sheet {
  position: relative;
  height: 100%;
  padding: 10px 24px 0 25px;
  border-left: 1px solid #888;
  border-right: 1px solid #888;
  box-sizing: border-box;
}
.sheet section + section {
  margin-top: 8px;
}
.sheet p {
  margin: 0;
  font: 6px/8px Lato, sans-serif;
  color: #000;
}
.sheet p span {
  display: block;
  white-space: pre;
}
.blender {
  width: 100%;
}
.blender text {
  font: 7px Lato, sans-serif;
}
.blender .dark {
  fill: #222;
}
.blender .light {
  fill: #ddd;
}
.vscroll {
  grid-column: 3;
  grid-row: 1;
  display: flex;
  flex-direction: column;
  background: #ececec;
  padding-top: 3px;
}
.vscroll svg {
  width: 8px;
  height: 8px;
}
.split {
  border-bottom: 1px solid #aaa;
}
.vtrack {
  flex: 1;
  display: flex;
  flex-direction: column;
}
.vtrack::before {
  content: '';
  flex: 170;
}
.vtrack::after {
  content: '';
  flex: 120;
}
.vthumb {
  flex: 59;
  background: #c9c9c9;
  border: 1px solid #aaa;
}
.hscroll {
  grid-column: 2 / 4;
  grid-row: 2;
  display: flex;
  background: #eee;
}
.size {
  padding: 0 10px 0 13px;
}
.htrack {
  flex: 1;
  display: flex;
}
.htrack::before {
  content: '';
  flex: 300;
}
.htrack::after {
  content: '';
  flex: 366;
}
.hthumb {
  flex: 19;
  background: #90cf95;
  border: 1px solid #72ad78;
  color: #fff;
  line-height: 6px;
  text-align: center;
}
.hscroll button {
  width: 8px;
  color: #777;
}
.statusbar {
  display: flex;
  align-items: center;
  justify-content: center;
  gap: 5px;
  height: 12px;
  flex: none;
  background: linear-gradient(#ccc, #e0e0e0);
}
.statusbar svg {
  width: 10px;
  height: 10px;
}
.statusbar input {
  width: 31px;
  height: 8px;
  margin: 0 -4px 0 -1px;
  background: #fff;
  text-align: center;
}
.statusbar .caret {
  margin: 0 -2px;
}
.taskbar {
  height: 4px;
  flex: none;
  border-top: 1px solid #8d8682;
  box-sizing: border-box;
  background: linear-gradient(90deg, #6c6663 0 6%, #919899 6% 14%, #5b5553 14% 15%, #284da0 15% 17%, #d8b35d 17% 20%, #685d58 20% 35%, #8f8f8f 35% 46%, #57494a 46%);
}
</style>
